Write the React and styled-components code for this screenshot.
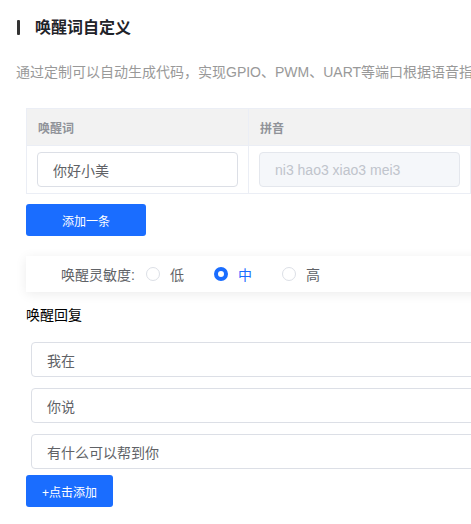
import React from "react";
import styled, { createGlobalStyle } from "styled-components";

const GlobalStyle = createGlobalStyle`
  html, body {
    margin: 0;
    padding: 0;
    background: #fff;
    overflow: hidden;
  }
  body {
    font-family: "Liberation Sans", "Noto Sans CJK SC", sans-serif;
  }
`;

const replies = ["我在", "你说", "有什么可以帮到你"];
const levels = [
  { label: "低", checked: false },
  { label: "中", checked: true },
  { label: "高", checked: false },
];

const App = () => {
  return (
    <Page>
      <GlobalStyle />
      {/* TITLE */}
      <Header>
        <Bar />
        <Title>唤醒词自定义</Title>
      </Header>
      <Desc>
        通过定制可以自动生成代码，实现GPIO、PWM、UART等端口根据语音指令进行相应的输出控制
      </Desc>

      <Content>
        {/* WAKE WORD TABLE */}
        <Table>
          <thead>
            <tr>
              <Th>唤醒词</Th>
              <Th>拼音</Th>
              <Th>操作</Th>
            </tr>
          </thead>
          <tbody>
            <tr>
              <Td>
                <Input defaultValue="你好小美" />
              </Td>
              <Td>
                <Input disabled placeholder="ni3 hao3 xiao3 mei3" />
              </Td>
              <Td />
            </tr>
          </tbody>
        </Table>
        <Button $width="120px" $gap="10px">添加一条</Button>

        {/* SENSITIVITY */}
        <Card>
          <CardLabel>唤醒灵敏度:</CardLabel>
          {levels.map((l) => (
            <Radio key={l.label} $checked={l.checked}>
              <Dot $checked={l.checked} />
              <span>{l.label}</span>
            </Radio>
          ))}
        </Card>

        {/* REPLIES */}
        <SubTitle>唤醒回复</SubTitle>
        <ReplyList>
          {replies.map((r) => (
            <ReplyInput key={r} defaultValue={r} />
          ))}
        </ReplyList>
        <Button $width="87px" $gap="6px">+点击添加</Button>
      </Content>
    </Page>
  );
};

// STYLED COMPONENTS
const Page = styled.div`
  width: 760px;
  padding-top: 19px;
  padding-bottom: 20px;
`;

const Header = styled.div`
  display: flex;
  align-items: center;
  height: 16px;
  padding-left: 17px;
`;

const Bar = styled.div`
  width: 3px;
  height: 15px;
  border-radius: 1px;
  background: #333;
  margin-right: 15px;
`;

const Title = styled.h2`
  margin: 0;
  font-size: 16px;
  font-weight: 700;
  color: #1f2329;
  line-height: 16px;
  padding-top: 1px;
`;

const Desc = styled.p`
  margin: 27px 0 0 16px;
  font-size: 14px;
  line-height: 20px;
  color: #999;
  white-space: nowrap;
`;

const Content = styled.div`
  padding-left: 26px;
  margin-top: 26px;
`;

const Table = styled.table`
  border-collapse: collapse;
  width: 666px;
  table-layout: fixed;
`;

const Th = styled.th`
  width: 222px;
  height: 37px;
  box-sizing: border-box;
  background: #f2f2f2;
  border: 1px solid #ebeef5;
  text-align: left;
  padding: 0 11px;
  font-size: 12px;
  font-weight: 700;
  color: #909399;
`;

const Td = styled.td`
  height: 48px;
  box-sizing: border-box;
  border: 1px solid #ebeef5;
  padding: 0 10px;
`;

const Input = styled.input`
  display: block;
  box-sizing: border-box;
  width: 201px;
  height: 35px;
  border: 1px solid #dcdfe6;
  border-radius: 4px;
  padding: 0 15px;
  font-family: inherit;
  font-size: 14px;
  color: #606266;
  background: #fff;
  outline: none;
  &:disabled {
    background: #f5f7fa;
    border-color: #e4e7ed;
  }
  &::placeholder {
    color: #c0c4cc;
  }
`;

const Button = styled.button`
  display: block;
  width: ${(p) => p.$width};
  height: 32px;
  margin-top: ${(p) => p.$gap};
  border: none;
  border-radius: 3px;
  background: #1a6dff;
  color: #fff;
  font-family: inherit;
  font-size: 12px;
  padding: 0;
`;

const Card = styled.div`
  display: flex;
  align-items: center;
  height: 36px;
  margin-top: 20px;
  padding-left: 35px;
  box-shadow: 0 2px 12px rgba(0, 0, 0, 0.08);
  font-size: 14px;
`;

const CardLabel = styled.span`
  color: #606266;
  margin-right: 11px;
`;

const Radio = styled.label`
  display: flex;
  align-items: center;
  margin-right: 30px;
  color: ${(p) => (p.$checked ? "#1a6dff" : "#606266")};
`;

const Dot = styled.span`
  box-sizing: border-box;
  width: 14px;
  height: 14px;
  border-radius: 50%;
  margin-right: 10px;
  border: ${(p) => (p.$checked ? "4px solid #1a6dff" : "1px solid #dcdfe6")};
  background: #fff;
`;

const SubTitle = styled.div`
  margin-top: 13px;
  font-size: 14px;
  line-height: 20px;
  font-weight: 400;
  color: #000;
`;

const ReplyList = styled.div`
  display: flex;
  flex-direction: column;
  gap: 11px;
  margin-top: 17px;
  padding-left: 5px;
`;

const ReplyInput = styled(Input)`
  width: 640px;
`;

export default App;
